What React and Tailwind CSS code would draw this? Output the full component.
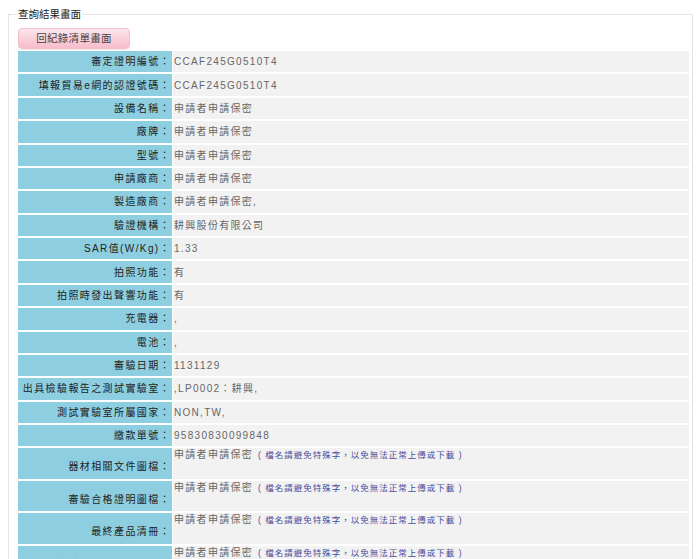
const rows = [
  ['審定證明編號', 'CCAF245G0510T4'],
  ['填報貿易e網的認證號碼', 'CCAF245G0510T4'],
  ['設備名稱', '申請者申請保密'],
  ['廠牌', '申請者申請保密'],
  ['型號', '申請者申請保密'],
  ['申請廠商', '申請者申請保密'],
  ['製造廠商', '申請者申請保密,'],
  ['驗證機構', '耕興股份有限公司'],
  ['SAR值(W/Kg)', '1.33'],
  ['拍照功能', '有'],
  ['拍照時發出聲響功能', '有'],
  ['充電器', ','],
  ['電池', ','],
  ['審驗日期', '1131129'],
  ['出具檢驗報告之測試實驗室', ',LP0002：耕興,'],
  ['測試實驗室所屬國家', 'NON,TW,'],
  ['繳款單號', '95830830099848'],
]

const fileRows = ['器材相關文件圖檔', '審驗合格證明圖檔', '最終產品清冊', '檢驗報告或測試報告']

function Note() {
  return (
    <span className="ml-[5px] text-[8.5px] tracking-[1px] text-[#4b4b9c]">( 檔名請避免特殊字，以免無法正常上傳或下載 )</span>
  )
}

export default function App() {
  return (
    <div className="w-[697px] h-[559px] overflow-hidden bg-white text-[10px] text-[#333]" style={{ fontFamily: '"Liberation Sans", "Noto Sans CJK TC", sans-serif' }}>
      <fieldset className="ml-[8px] mt-[8px] w-[685px] border border-[#e4e4e4] pl-[8px] pb-4">
        <legend className="px-px leading-[13px] text-[10.5px] text-[#222]">查詢結果畫面</legend>
        <button className="mt-[7px] ml-px w-[112px] h-[21px] rounded-[4px] border border-[#f3c0cc] bg-gradient-to-b from-[#fde6ec] to-[#f6bccb] text-[10.5px] text-[#444] tracking-[0.3px] shadow-[0_1px_1px_rgba(0,0,0,0.08)]">
          回紀錄清單畫面
        </button>
        <div className="mt-[2px] ml-px w-[671px]">
          {rows.map(([k, v]) => (
            <div key={k} className="flex mt-[2px] h-[21.375px]">
              <div className="w-[154px] bg-[#8dcfe1] flex items-center justify-end pr-[1px] tracking-[1.4px] text-[#222]">{k}：</div>
              <div className="ml-px flex-1 bg-[#f2f2f2] flex items-center pl-[1px] tracking-[1.3px] text-[#666]">{v}</div>
            </div>
          ))}
          {fileRows.map((k) => (
            <div key={k} className="flex mt-[2px] h-[30.5px]">
              <div className="w-[154px] bg-[#8dcfe1] flex items-center justify-end pr-[1px] pt-[6px] tracking-[1.4px] text-[#222]">{k}：</div>
              <div className="ml-px flex-1 bg-[#f2f2f2] pl-[1px] tracking-[1.3px] text-[#666] leading-[14px]">
                申請者申請保密<Note />
              </div>
            </div>
          ))}
        </div>
      </fieldset>
    </div>
  )
}
